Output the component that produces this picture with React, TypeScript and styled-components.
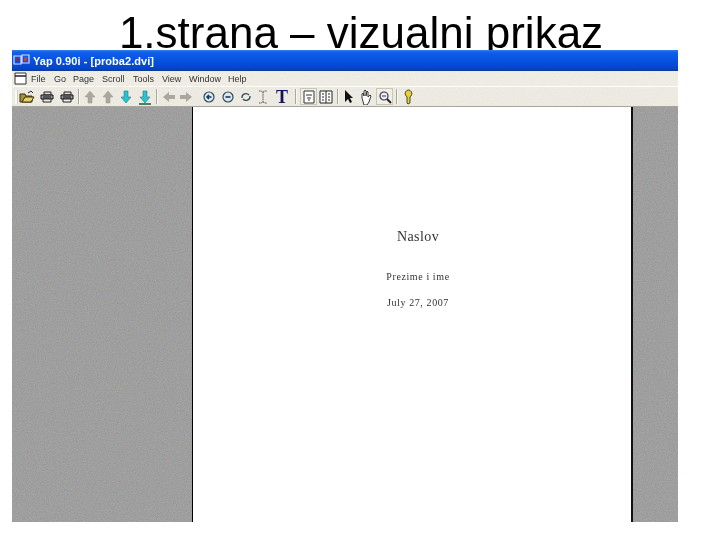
import React from 'react';
import styled, { createGlobalStyle } from 'styled-components';

const GlobalStyle = createGlobalStyle`
  html, body {
    margin: 0;
    padding: 0;
    background: #fff;
  }
`;

const menuItems = [
  { label: 'File', width: 23 },
  { label: 'Go', width: 19 },
  { label: 'Page', width: 29 },
  { label: 'Scroll', width: 31 },
  { label: 'Tools', width: 29 },
  { label: 'View', width: 27 },
  { label: 'Window', width: 39 },
  { label: 'Help', width: 24 },
];

const Noise = ({ id, amount }: { id: string; amount: number }) => (
  <NoiseLayer aria-hidden="true">
    <filter id={id}>
      <feTurbulence type="fractalNoise" baseFrequency="0.9" numOctaves="2" seed="4" />
      <feColorMatrix
        values={`${amount} 0 0 0 ${0.5 - amount / 2} 0 ${amount} 0 0 ${0.5 - amount / 2} 0 0 ${amount} 0 ${0.5 - amount / 2} 0 0 0 0 1`}
      />
    </filter>
    <rect width="100%" height="100%" filter={`url(#${id})`} />
  </NoiseLayer>
);

const Icon = ({ w = 16, children }: { w?: number; children: React.ReactNode }) => (
  <IconSvg width={w} height="16" viewBox={`0 0 ${w} 16`}>
    {children}
  </IconSvg>
);

const UpArrow = ({ down, color, bar }: { down?: boolean; color: string; bar?: boolean }) => (
  <Icon w={12}>
    <path
      d={down ? 'M4 2h4v6h3l-5 6-5-6h3z' : 'M4 14h4V8h3L6 2 1 8h3z'}
      fill={color}
      stroke={down ? '#0a6a6a' : '#9a9a90'}
      strokeWidth="0.5"
    />
    {bar && <path d="M0 15h12" stroke="#1a5a3a" strokeWidth="1.5" />}
  </Icon>
);

const SideArrow = ({ right }: { right?: boolean }) => (
  <Icon w={14}>
    <path
      d={right ? 'M1 6h6V3l6 5-6 5v-3H1z' : 'M13 6H7V3L1 8l6 5v-3h6z'}
      fill="#a8a89e"
    />
  </Icon>
);

const Round = ({ mark }: { mark: string }) => (
  <Icon w={12}>
    <circle cx="6" cy="8" r="5" fill="#dfe6ea" stroke="#2f4a5c" strokeWidth="1.2" />
    <path d={mark} stroke="#123a66" strokeWidth="1.6" fill="none" />
  </Icon>
);

const Printer = () => (
  <Icon w={14}>
    <path d="M4 3h7v3H4z" fill="#ddd" stroke="#222" />
    <path d="M1 6h12v4H1z" fill="#999" stroke="#111" />
    <path d="M3 10h8v3H3z" fill="#eee" stroke="#222" />
    <path d="M3 8h8" stroke="#111" />
  </Icon>
);

const App = () => {
  return (
    <Slide>
      <GlobalStyle />
      <SlideTitle>1.strana – vizualni prikaz</SlideTitle>
      <Window>
        <TitleBar>
          <AppIcon width="18" height="14" viewBox="0 0 18 14">
            <path d="M1 2h7v8H1zM9 1h7v8H9z" fill="none" stroke="#d8d8ff" strokeWidth="1.2" />
            <path d="M3 4h3v4H3z" fill="#7a2a6a" />
            <path d="M11 3h3v4h-3z" fill="#c04040" />
          </AppIcon>
          <TitleText>Yap 0.90i - [proba2.dvi]</TitleText>
        </TitleBar>
        <MenuBar>
          <Noise id="menu-noise" amount={0.3} />
          <DocIcon width="13" height="13" viewBox="0 0 13 13">
            <path d="M1 1h11v11H1z" fill="#fff" stroke="#333" />
            <path d="M1 4h11" stroke="#223" strokeWidth="1.5" />
          </DocIcon>
          {menuItems.map((item) => (
            <MenuItem key={item.label} $width={item.width}>
              {item.label}
            </MenuItem>
          ))}
        </MenuBar>
        <ToolBar>
          <Noise id="tool-noise" amount={0.3} />
          <Handle />
          <Icon>
            <path d="M1 5h5l1 2h6v6H1z" fill="#a89238" stroke="#3a2e0c" />
            <path d="M3 13l3-5h9l-3 5z" fill="#e6d26e" stroke="#3a2e0c" />
            <path d="M9 4l3-2 2 2" stroke="#223" fill="none" />
          </Icon>
          <Gap $w={5} />
          <Printer />
          <Gap $w={6} />
          <Printer />
          <Divider $ml={4} $mr={4} />
          <UpArrow color="#a8a89e" />
          <Gap $w={6} />
          <UpArrow color="#a8a89e" />
          <Gap $w={6} />
          <UpArrow down color="#28c4d4" />
          <Gap $w={7} />
          <UpArrow down bar color="#28c4d4" />
          <Divider $ml={5} $mr={4} />
          <SideArrow />
          <Gap $w={3} />
          <SideArrow right />
          <Gap $w={10} />
          <Round mark="M8.500 8H4M6 6L4 8l2 2" />
          <Gap $w={7} />
          <Round mark="M3.500 8h5" />
          <Gap $w={6} />
          <Icon w={12}>
            <path d="M2 9a4 4 0 0 1 7-3M10 7a4 4 0 0 1-7 3" stroke="#2f4a5c" strokeWidth="1.3" fill="none" />
          </Icon>
          <Gap $w={6} />
          <Icon w={10}>
            <path d="M1 2h2l2 1 2-1h2M5 3v10M1 14h2l2-1 2 1h2" stroke="#555" strokeWidth="1" strokeDasharray="1.5 0.7" fill="none" />
          </Icon>
          <Gap $w={8} />
          <BigT>T</BigT>
          <Divider $ml={7} $mr={3} />
          <PressedButton>
            <svg width="12" height="14" viewBox="0 0 12 14">
              <path d="M1 1h10v12H1z" fill="#fff" stroke="#333" />
              <path d="M3 5h6M4 8h4M5 10h2" stroke="#333" />
            </svg>
          </PressedButton>
          <Gap $w={2} />
          <Icon w={14}>
            <path d="M1 2h12v12H1zM7 2v12" fill="#fff" stroke="#222" />
            <path d="M3 5h2M3 8h2M3 11h2M9 5h2M9 8h2M9 11h2" stroke="#222" />
          </Icon>
          <Divider $ml={4} $mr={4} />
          <Icon w={10}>
            <path d="M2 1v12l3-3 2 4 2-1-2-4h3z" fill="#111" />
          </Icon>
          <Gap $w={6} />
          <Icon w={14}>
            <path d="M3 9V5l1-1 1 3V2l1-1 1 1v5l1-5 1 1v5l2-2 1 1-2 6-2 3H5z" fill="#fff" stroke="#222" strokeWidth="0.9" />
          </Icon>
          <Gap $w={3} />
          <PressedButton>
            <svg width="14" height="14" viewBox="0 0 14 14">
              <circle cx="6" cy="6" r="4" fill="#eef" stroke="#334" strokeWidth="1.2" />
              <path d="M9 9l4 4" stroke="#222" strokeWidth="2" />
              <path d="M4 6h4" stroke="#334" />
            </svg>
          </PressedButton>
          <Divider $ml={3} $mr={6} />
          <Icon w={9}>
            <path d="M4.500 1a3.500 3.500 0 0 1 3 5L6 8v6l-2 1-1-1V8L1.500 6a3.500 3.500 0 0 1 3-5z" fill="#e8d030" stroke="#222" strokeWidth="0.8" />
          </Icon>
        </ToolBar>
        <Workspace>
          <Noise id="desk-noise" amount={0.28} />
          <Page>
            <PageTitle>Naslov</PageTitle>
            <PageAuthor>Prezime i ime</PageAuthor>
            <PageDate>July 27, 2007</PageDate>
          </Page>
        </Workspace>
      </Window>
    </Slide>
  );
};

export default App;

const Slide = styled.div`
  width: 720px;
  height: 540px;
  background: #fff;
  overflow: hidden;
`;

const SlideTitle = styled.h1`
  margin: 0;
  height: 50px;
  overflow: hidden;
  box-sizing: border-box;
  padding: 8px 0 0 2px;
  font-family: 'Liberation Sans', Arial, sans-serif;
  font-size: 44px;
  line-height: 50px;
  font-weight: 400;
  color: #000;
  text-align: center;
  white-space: nowrap;
`;

const Window = styled.div`
  margin-left: 12px;
  width: 666px;
  height: 472px;
  display: flex;
  flex-direction: column;
`;

const TitleBar = styled.div`
  height: 21px;
  display: flex;
  align-items: center;
  padding-left: 1px;
  background: linear-gradient(180deg, #2f7fe8 0%, #0f5fe6 12%, #0650de 55%, #0444c8 90%, #123a88 100%);
`;

const AppIcon = styled.svg`
  filter: blur(0.5px);
`;

const TitleText = styled.span`
  margin-left: 2px;
  font-family: 'Liberation Sans', Arial, sans-serif;
  font-size: 11px;
  font-weight: 700;
  letter-spacing: 0.05px;
  color: #fff;
  white-space: nowrap;
  filter: blur(0.4px);
`;

const MenuBar = styled.div`
  position: relative;
  height: 15px;
  display: flex;
  align-items: center;
  padding-left: 2px;
  background: #e0dccc;
  overflow: hidden;
`;

const NoiseLayer = styled.svg`
  position: absolute;
  inset: 0;
  width: 100%;
  height: 100%;
  mix-blend-mode: overlay;
  pointer-events: none;
`;

const DocIcon = styled.svg`
  position: relative;
  margin-right: 4px;
  filter: blur(0.3px);
`;

const MenuItem = styled.span<{ $width: number }>`
  position: relative;
  width: ${(p) => p.$width}px;
  font-family: 'Liberation Sans', Arial, sans-serif;
  font-size: 9px;
  color: #333;
  white-space: nowrap;
  filter: blur(0.4px);
`;

const ToolBar = styled.div`
  position: relative;
  height: 19px;
  margin-top: 1px;
  display: flex;
  align-items: center;
  padding-left: 3px;
  background: #dcd8c8;
  border-bottom: 1px solid #a8a698;
  box-sizing: content-box;
  overflow: hidden;
`;

const Handle = styled.div`
  width: 2px;
  height: 14px;
  margin-right: 1px;
  background: #f6f5ee;
  border-right: 1px solid #a8a698;
`;

const IconSvg = styled.svg`
  position: relative;
  flex: none;
  filter: blur(0.45px);
`;

const Gap = styled.div<{ $w: number }>`
  flex: none;
  width: ${(p) => p.$w}px;
`;

const Divider = styled.div<{ $ml: number; $mr: number }>`
  position: relative;
  flex: none;
  width: 1px;
  height: 15px;
  margin: 0 ${(p) => p.$mr}px 0 ${(p) => p.$ml}px;
  background: #aaa89a;
  border-right: 1px solid #f8f7f0;
`;

const BigT = styled.span`
  position: relative;
  font-family: 'Liberation Serif', 'Times New Roman', serif;
  font-size: 18px;
  line-height: 18px;
  font-weight: 700;
  color: #14145e;
  filter: blur(0.3px);
`;

const PressedButton = styled.div`
  position: relative;
  flex: none;
  width: 17px;
  height: 17px;
  display: flex;
  align-items: center;
  justify-content: center;
  background: #f0efe6;
  border: 1px solid #c8c6b8;
  box-sizing: border-box;
  filter: blur(0.3px);
`;

const Workspace = styled.div`
  position: relative;
  flex: 1;
  min-height: 0;
  display: flex;
  padding-left: 180px;
  background: #6c6c6c;
  overflow: hidden;
`;

const Page = styled.div`
  position: relative;
  width: 441px;
  flex: none;
  height: 100%;
  box-sizing: border-box;
  padding-left: 12px;
  border-left: 1px solid #000;
  border-right: 2px solid #111;
  background: #fff;
  display: flex;
  flex-direction: column;
  align-items: center;
  font-family: 'Liberation Serif', 'Times New Roman', serif;
  color: #333;
`;

const PageTitle = styled.div`
  margin-top: 120px;
  font-size: 14px;
  line-height: 20px;
  letter-spacing: 0.4px;
  filter: blur(0.4px);
`;

const PageAuthor = styled.div`
  margin-top: 24px;
  font-size: 10px;
  line-height: 12px;
  letter-spacing: 0.6px;
  filter: blur(0.4px);
`;

const PageDate = styled.div`
  margin-top: 14px;
  font-size: 10px;
  line-height: 12px;
  letter-spacing: 0.6px;
  filter: blur(0.4px);
`;
